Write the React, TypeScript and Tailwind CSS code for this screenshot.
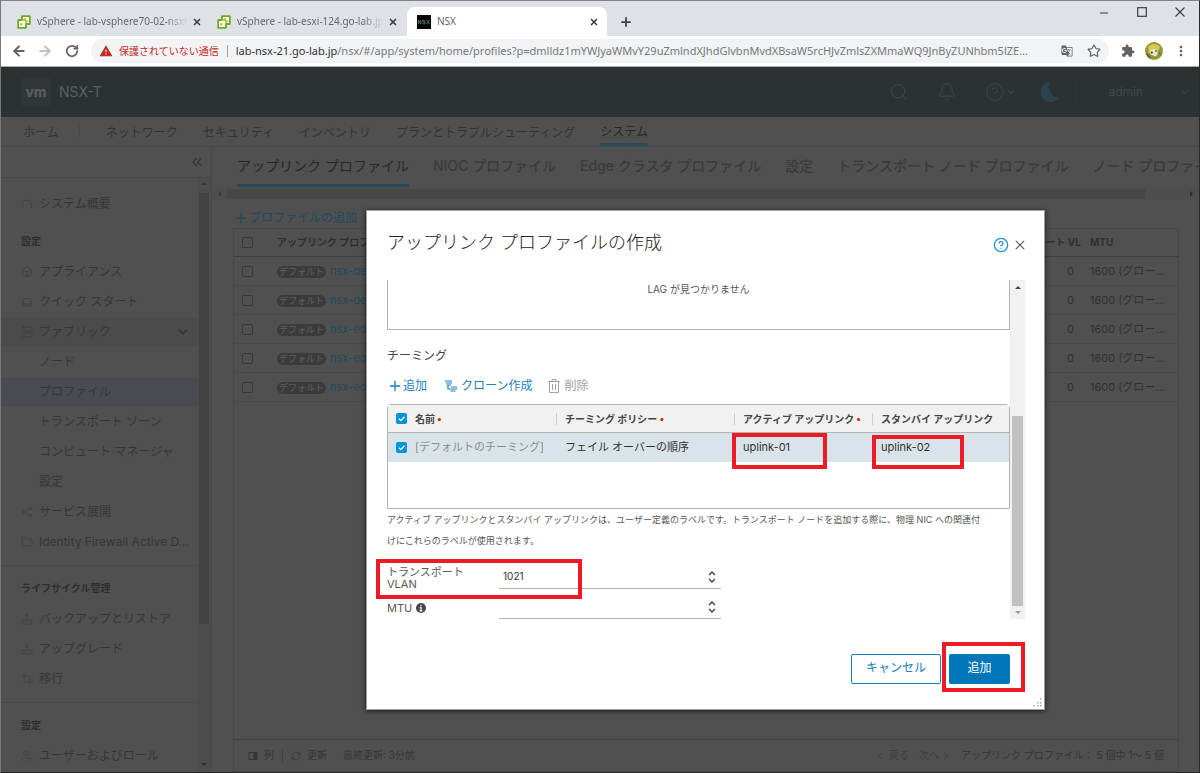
import type { ReactNode } from 'react'
import {
  ArrowLeft,
  ArrowRight,
  Bell,
  Box,
  ChevronDown,
  ChevronLeft,
  ChevronRight,
  ChevronsLeft,
  CircleHelp,
  Crop,
  Folder,
  Gauge,
  HardDriveDownload,
  HardDriveUpload,
  Laptop,
  Plus,
  RefreshCw,
  RotateCw,
  Search,
  Server,
  Share2,
  Star,
  Users,
  X,
} from 'lucide-react'
import type { LucideIcon } from 'lucide-react'
import { MdExtension, MdGTranslate, MdMoreVert, MdWarning } from 'react-icons/md'

const appFont = "font-['Inter','Noto_Sans_CJK_JP',sans-serif]"
const chromeFont = "font-['Noto_Sans','Noto_Sans_CJK_JP',sans-serif]"

interface SideItem {
  label: string
  icon?: LucideIcon
  open?: boolean
  active?: boolean
}

interface SideGroup {
  title?: string
  items: SideItem[]
}

const sideGroups: SideGroup[] = [
  { items: [{ label: 'システム概要', icon: Gauge }] },
  {
    title: '設定',
    items: [
      { label: 'アプライアンス', icon: Box },
      { label: 'クイック スタート', icon: Laptop },
      { label: 'ファブリック', icon: Server, open: true },
      { label: 'ノード' },
      { label: 'プロファイル', active: true },
      { label: 'トランスポート ゾーン' },
      { label: 'コンピュート マネージャ' },
      { label: '設定' },
      { label: 'サービス展開', icon: Share2 },
      { label: 'Identity Firewall Active D...', icon: Folder },
    ],
  },
  {
    title: 'ライフサイクル管理',
    items: [
      { label: 'バックアップとリストア', icon: HardDriveUpload },
      { label: 'アップグレード', icon: HardDriveDownload },
      { label: '移行', icon: Crop },
    ],
  },
  { title: '設定', items: [{ label: 'ユーザーおよびロール', icon: Users }] },
]

const mainNav = ['ネットワーク', 'セキュリティ', 'インベントリ', 'プランとトラブルシューティング', 'システム']

const profileTabs = [
  'アップリンク プロファイル',
  'NIOC プロファイル',
  'Edge クラスタ プロファイル',
  '設定',
  'トランスポート ノード プロファイル',
  'ノード プロファイル',
]

const profiles = ['nsx-de', 'nsx-de', 'nsx-ed', 'nsx-ed', 'nsx-ed']

function VSphereIcon() {
  return (
    <svg viewBox="0 0 14 14" className="h-3.5 w-3.5 shrink-0">
      <path d="M5 1.2h7.8V9H9v3.8H1.2V5H5z" fill="#fff" stroke="#62b01e" strokeWidth="1.8" strokeLinejoin="round" />
      <path d="M5 5h4v4" fill="none" stroke="#62b01e" strokeWidth="1" />
      <path d="M6.8 3.2h2.4v2.2H6.800zM3.2 8.2h2.4v2.4H3.200z" fill="#f9a825" />
      <path d="M9.600 5.400h1.600v1.600H9.600z" fill="#f9a825" />
    </svg>
  )
}

function BrowserTab({ title, divider }: { title: string; divider?: boolean }) {
  return (
    <div
      className={
        divider
          ? 'flex w-[206px] shrink-0 items-center pt-1.5 pl-4'
          : 'flex w-[200px] shrink-0 items-center pt-1.5 pl-2.5'
      }
    >
      <VSphereIcon />
      <span className="ml-1.5 flex-1 whitespace-nowrap bg-gradient-to-r from-[#5f6368] from-85% to-transparent bg-clip-text text-[10px] text-transparent">
        {title}
      </span>
      <button aria-label="閉じる" className="ml-1">
        <X className="h-2.5 w-2.5 text-[#3c4043]" strokeWidth={4} />
      </button>
      <span className={divider ? 'ml-2 h-4 w-px bg-[#8a8d91]' : 'ml-2 h-4 w-px'} />
    </div>
  )
}

function TabStrip() {
  return (
    <div className="flex h-[35px] bg-[#dee1e6] text-[#5f6368]">
      <BrowserTab title="vSphere - lab-vsphere70-02-nsxt" divider />
      <BrowserTab title="vSphere - lab-esxi-124.go-lab.jp" />
      <div className="mt-1.5 flex w-[200px] items-center rounded-t-lg bg-white pl-2.5 pr-2">
        <svg viewBox="0 0 14 14" className="h-3.5 w-3.5">
          <rect width="14" height="14" fill="#000" />
          <path
            d="M1.5 9V5l2.3 4V5M8 5.3H5.6v1.6H8v1.8H5.4M9.6 5l3 4M12.6 5l-3 4"
            fill="none"
            stroke="#4f8f86"
            strokeWidth=".8"
          />
        </svg>
        <span className="ml-1.5 flex-1 text-[10px]">NSX</span>
        <button aria-label="閉じる">
          <X className="h-2.5 w-2.5 text-[#3c4043]" strokeWidth={4} />
        </button>
      </div>
      <button aria-label="新しいタブ" className="ml-3 pt-1.5">
        <Plus className="h-3.5 w-3.5 text-[#3c4043]" strokeWidth={3} />
      </button>
      <div className="ml-auto flex items-start gap-7 pt-1.5 pr-3.5 text-[#3a3d40]">
        <button aria-label="最小化">
          <svg viewBox="0 0 10 10" className="h-2.5 w-2.5">
            <path d="M1 6h8" stroke="currentColor" />
          </svg>
        </button>
        <button aria-label="最大化">
          <svg viewBox="0 0 10 10" className="h-2.5 w-2.5">
            <rect x=".7" y=".7" width="8.6" height="8.6" fill="none" stroke="currentColor" strokeWidth="1.2" />
          </svg>
        </button>
        <button aria-label="ウィンドウを閉じる">
          <svg viewBox="0 0 10 10" className="h-2.5 w-2.5">
            <path d="M.5.5l9 9M9.5.5l-9 9" stroke="currentColor" strokeWidth="1.1" />
          </svg>
        </button>
      </div>
    </div>
  )
}

function AddressBar() {
  return (
    <div className="flex h-[31px] items-center border-b border-[#a9abad] bg-white pl-2.5 pr-2.5">
      <button aria-label="戻る">
        <ArrowLeft className="h-4 w-4 text-[#5f6368]" strokeWidth={3} />
      </button>
      <button aria-label="進む" className="ml-2.5">
        <ArrowRight className="h-4 w-4 text-[#bdc1c6]" strokeWidth={3} />
      </button>
      <button aria-label="再読み込み" className="ml-3">
        <RotateCw className="h-3.5 w-3.5 text-[#5f6368]" strokeWidth={3} />
      </button>
      <div className="ml-3 flex h-6 min-w-0 flex-1 items-center rounded-full bg-[#f1f3f4] px-2">
        <MdWarning className="h-3.5 w-3.5 shrink-0 text-[#c5281c]" />
        <span className="ml-1.5 shrink-0 text-[10px] text-[#c5281c]">保護されていない通信</span>
        <span className="mx-2 h-3 w-px shrink-0 bg-[#9aa0a6]" />
        <span className="flex-1 whitespace-nowrap text-[11px] text-[#75797d]">
          <span className="text-[#303236]">lab-nsx-21.go-lab.jp</span>
          /nsx/#/app/system/home/profiles?p=dmlldz1mYWJyaWMvY29uZmlndXJhdGlvbnMvdXBsaW5rcHJvZmlsZXMmaWQ9JnByZUNhbm5lZE...
        </span>
        <MdGTranslate className="ml-2 h-3 w-3 shrink-0 text-[#5f6368]" />
        <button aria-label="ブックマーク" className="ml-3.5">
          <Star className="h-3.5 w-3.5 text-[#5f6368]" strokeWidth={2} />
        </button>
      </div>
      <MdExtension className="ml-3 h-3.5 w-3.5 text-[#5f6368]" />
      <svg viewBox="0 0 18 18" className="ml-2.5 h-[18px] w-[18px]">
        <circle cx="9" cy="9" r="9" fill="#8f9a3a" />
        <path d="M3 5c3-4 9-4 12 0l-2 5-4-3-5 4z" fill="#d9c94f" />
        <path d="M5 9c1-2 5-3 7 0s-1 6-3 5-5-2-4-5z" fill="#e9e6c8" />
        <path d="M1 11c2 0 3 3 6 6-3-.4-5-3-6-6zM14 10c2 1 2 2 1 4z" fill="#4f6326" />
        <circle cx="6.8" cy="10.4" r="1" fill="#2b2b2b" />
        <circle cx="11" cy="9" r=".8" fill="#2b2b2b" />
      </svg>
      <MdMoreVert className="ml-2.5 h-4 w-4 text-[#5f6368]" />
    </div>
  )
}

function AppHeader() {
  return (
    <header className="flex h-[50px] shrink-0 items-center bg-[#2c3134] pl-5 pr-2 text-[#43484b]">
      <div className="flex h-[30px] w-[30px] items-center justify-center rounded bg-[#303638] text-sm font-bold text-[#5b5f61]">
        vm
      </div>
      <span className="ml-2 text-sm text-[#5b5f61]">NSX-T</span>
      <div className="ml-auto flex items-center">
        <Search className="h-5 w-5" strokeWidth={1} />
        <Bell className="ml-7 h-5 w-5" strokeWidth={1} />
        <CircleHelp className="ml-7 h-5 w-5" strokeWidth={1} />
        <ChevronDown className="h-3 w-3" />
        <svg viewBox="0 0 18 20" className="ml-6 h-5 w-[18px]">
          <path d="M9.5 0A10 10 0 1 0 18 15.5 10 10 0 0 1 9.500 0z" fill="#2c4350" />
        </svg>
        <span className="ml-4 h-8 w-px bg-[#2f3437]" />
        <span className="ml-8 text-xs">admin</span>
        <ChevronDown className="ml-9 h-3 w-3" />
      </div>
    </header>
  )
}

function MainNav() {
  return (
    <nav className="flex h-[30px] shrink-0 items-stretch border-b border-[#484848] pl-[22px] text-xs text-[#343434]">
      <a href="#home" className="flex items-center pt-0.5">ホーム</a>
      <span className="ml-5 my-2 w-px bg-[#494949]" />
      <div className="ml-[26px] flex gap-[25px]">
        {mainNav.map((label) => (
          <a
            key={label}
            href="#nav"
            className={
              label === 'システム'
                ? 'flex items-center border-b-[3px] border-[#2c4c5e] pt-1 text-[#262626]'
                : 'flex items-center pt-0.5'
            }
          >
            {label}
          </a>
        ))}
      </div>
    </nav>
  )
}

function Sidebar() {
  return (
    <aside className="flex w-[211px] shrink-0 flex-col border-r border-[#494949] text-xs text-[#373737]">
      <div className="flex h-[31px] shrink-0 items-center justify-end border-b border-[#494949] pr-1.5">
        <button aria-label="折りたたむ">
          <ChevronsLeft className="h-4 w-4" strokeWidth={2} />
        </button>
      </div>
      <div className="flex min-h-0 flex-1">
        <div className="min-w-0 flex-1 overflow-hidden">
          {sideGroups.map((group, i) => (
            <div key={i} className={i > 1 ? 'mt-2 border-t border-[#494949] pt-2' : i === 1 ? 'pt-2' : 'pt-[11px]'}>
              {group.title && (
                <h2 className="flex h-[30px] items-center pl-5 text-[10px] font-bold text-[#2e2e2e]">{group.title}</h2>
              )}
              {group.items.map(({ label, icon: Icon, open, active }) => (
                <a
                  key={label}
                  href="#side"
                  className={`flex h-[30px] items-center pl-5 ${active ? 'bg-[#484c50]' : open ? 'bg-[#4b4b4b]' : ''}`}
                >
                  <span className="w-[18px] shrink-0">
                    {Icon && <Icon className="h-3 w-3 text-[#3c4446]" strokeWidth={2} />}
                  </span>
                  <span className="flex-1 truncate">{label}</span>
                  {open && <ChevronDown className="mr-2 h-3.5 w-3.5 text-[#2e2e2e]" />}
                </a>
              ))}
            </div>
          ))}
        </div>
        <div className="flex w-[13px] flex-col items-center bg-[#4d4d4d] pr-0.5">
          <span className="my-1 h-0 w-0 border-x-[3px] border-b-[3px] border-x-transparent border-b-[#3a3a3a]" />
          <span className="mt-1 h-[431px] w-2.5 bg-[#434343]" />
          <span className="mt-auto mb-1.5 h-0 w-0 border-x-[3px] border-t-[3px] border-x-transparent border-t-[#2c2c2c]" />
        </div>
      </div>
    </aside>
  )
}

function DimCheckbox({ label }: { label: string }) {
  return (
    <input
      type="checkbox"
      aria-label={label}
      className="block h-[11px] w-[11px] appearance-none rounded-xs border border-[#383838]"
    />
  )
}

function ProfileTable() {
  return (
    <div className="flex flex-1 flex-col border border-[#484848]">
      <div className="flex-1">
        <table className="w-full table-fixed border-separate border-spacing-0 text-[11px] text-[#303030]">
          <thead>
            <tr className="h-7 text-left text-[10px]">
              <th className="w-[43px] border-b border-[#404040] pl-2">
                <DimCheckbox label="すべて選択" />
              </th>
              <th className="border-b border-[#404040] p-0">アップリンク プロフ</th>
              <th className="w-[110px] whitespace-nowrap border-b border-[#404040] p-0 pr-[9px] text-right">
                トランスポート VL
              </th>
              <th className="w-[88px] border-b border-[#404040] p-0">MTU</th>
            </tr>
          </thead>
          <tbody>
            {profiles.map((name, i) => (
              <tr key={i} className="h-[29px]">
                <td className="border-b border-[#494949] pl-2">
                  <DimCheckbox label={name} />
                </td>
                <td className="border-b border-[#494949] p-0">
                  <span className="mr-1 inline-block rounded-full bg-[#3b3b3b] px-0.5 text-[9px] leading-3 text-[#606060]">
                    デフォルト
                  </span>
                  <a href="#profile" className="text-[#24495f]">{name}</a>
                </td>
                <td className="border-b border-[#494949] p-0 pr-4 text-right">0</td>
                <td className="border-b border-[#494949] p-0 whitespace-nowrap">1600 (グロー...</td>
              </tr>
            ))}
          </tbody>
        </table>
      </div>
      <div className="flex h-8 items-center border-t border-[#404040] px-3.5 text-[10px] text-[#363636]">
        <svg viewBox="0 0 10 10" className="h-2.5 w-2.5">
          <path d="M1 1.500h8v7H1z" fill="none" stroke="currentColor" />
          <path d="M5.500 1.500H9v7H5.500z" fill="currentColor" />
        </svg>
        <button className="ml-1.5">列</button>
        <span className="mx-2 h-3 w-px bg-[#404040]" />
        <RefreshCw className="h-2.5 w-2.5" />
        <button className="ml-1.5">更新</button>
        <span className="ml-4">最終更新: 3分前</span>
        <div className="ml-auto flex items-center text-[#3e3e3e]">
          <ChevronLeft className="h-2.5 w-2.5" />
          <button className="ml-1">戻る</button>
          <button className="ml-2.5">次へ</button>
          <ChevronRight className="ml-0.5 h-2.5 w-2.5" />
          <span className="ml-2.5 text-[#363636]">アップリンク プロファイル： 5 個中 1～ 5 個</span>
        </div>
      </div>
    </div>
  )
}

function Content() {
  return (
    <main className="flex min-w-0 flex-1 flex-col">
      <div className="flex h-10 shrink-0 gap-6 overflow-hidden whitespace-nowrap pl-[25px] text-sm text-[#3b3b3b]">
        {profileTabs.map((label, i) => (
          <a
            key={label}
            href="#tab"
            className={
              i === 0
                ? 'flex items-center border-b-[3px] border-[#26495d] pt-px text-[#282828]'
                : 'flex items-center border-b-[3px] border-transparent pt-px font-medium'
            }
          >
            {label}
          </a>
        ))}
      </div>
      <div className="flex h-[13px] shrink-0 items-center bg-[#4e4e4e] px-1.5">
        <span className="h-0 w-0 border-y-[3px] border-r-[3px] border-y-transparent border-r-[#383838]" />
        <span className="ml-1.5 mr-11 h-2.5 flex-1 bg-[#474747]" />
        <span className="h-0 w-0 border-y-[3px] border-l-[3px] border-y-transparent border-l-[#2c2c2c]" />
      </div>
      <div className="flex flex-1 flex-col pl-[21px] pr-5">
        <button className="mt-2 flex h-5 items-center text-xs text-[#24495f]">
          <Plus className="h-4 w-4" strokeWidth={2} />
          プロファイルの追加
        </button>
        <ProfileTable />
      </div>
    </main>
  )
}

function BlueCheckbox({ label }: { label: string }) {
  return (
    <span className="relative block h-[11px] w-[11px]">
      <input
        type="checkbox"
        defaultChecked
        aria-label={label}
        className="block h-[11px] w-[11px] appearance-none rounded-xs bg-[#0095d3]"
      />
      <svg viewBox="0 0 11 11" className="pointer-events-none absolute inset-0">
        <path d="M2.800 5.600l2 2 3.600-3.800" fill="none" stroke="#fff" strokeWidth="1.300" />
      </svg>
    </span>
  )
}

function HeadCell({ children, required, first }: { children: ReactNode; required?: boolean; first?: boolean }) {
  return (
    <div className={first ? 'flex whitespace-nowrap leading-3' : 'flex whitespace-nowrap border-l border-[#d0d0d0] pl-2 leading-3'}>
      {children}
      {required && <span className="ml-0.5 leading-2.5 text-[#e12200]">•</span>}
    </div>
  )
}

function TeamingTable() {
  return (
    <div className="h-[105px] rounded-t-sm border border-[#b3b3b3]">
      <table className="w-full table-fixed border-separate border-spacing-0 text-[11px] text-[#313131]">
        <thead>
          <tr className="h-7 bg-[#f1f1f1] text-left text-[10px] text-[#454545]">
            <th className="w-[27px] border-b border-[#b3b3b3] p-0 pl-2"><BlueCheckbox label="すべて選択" /></th>
            <th className="w-[141px] border-b border-[#b3b3b3] p-0"><HeadCell required first>名前</HeadCell></th>
            <th className="w-[178px] border-b border-[#b3b3b3] p-0"><HeadCell required>チーミング ポリシー</HeadCell></th>
            <th className="w-[138px] border-b border-[#b3b3b3] p-0"><HeadCell required>アクティブ アップリンク</HeadCell></th>
            <th className="border-b border-[#b3b3b3] p-0"><HeadCell>スタンバイ アップリンク</HeadCell></th>
          </tr>
        </thead>
        <tbody>
          <tr className="h-[29px] whitespace-nowrap bg-[#d9e4ea]">
            <td className="p-0 pl-2"><BlueCheckbox label="デフォルトのチーミング" /></td>
            <td className="p-0 text-[#8b8b8b]">[デフォルトのチーミング]</td>
            <td className="p-0 pl-[9px]">フェイル オーバーの順序</td>
            <td className="relative p-0 pl-[9px]">
              uplink-01
              <span className="pointer-events-none absolute top-0 -left-0.5 h-9 w-[95px] border-4 border-[#ed1c24]" />
            </td>
            <td className="relative p-0 pl-[9px]">
              uplink-02
              <span className="pointer-events-none absolute top-0.5 left-0 h-[34px] w-[92px] border-4 border-[#ed1c24]" />
            </td>
          </tr>
        </tbody>
      </table>
    </div>
  )
}

function NumberRow({ id, value, children }: { id: string; value?: string; children: ReactNode }) {
  return (
    <div className="flex h-[30px] items-end">
      <label htmlFor={id} className="flex h-full w-28 items-center pt-2 text-[11px] leading-3 text-[#565656]">
        {children}
      </label>
      <div className="flex h-6 w-[222px] items-center border-b border-[#b3b3b3] pr-1">
        <input
          id={id}
          defaultValue={value}
          inputMode="numeric"
          className="min-w-0 flex-1 bg-transparent pl-1 text-[10px] text-[#313131] outline-none"
        />
        <svg viewBox="0 0 10 14" className="h-3.5 w-2.5">
          <path d="M2 5L5 2 8 5M2 9L5 12 8 9" fill="none" stroke="#3a3a3a" strokeWidth="1.300" />
        </svg>
      </div>
    </div>
  )
}

function CreateProfileDialog() {
  return (
    <section
      role="dialog"
      aria-labelledby="dialog-title"
      className="absolute top-[209px] left-[365px] w-[679px] border border-[#a0a0a0] bg-white pl-5 pr-[19px] shadow-[0_1px_5px_rgba(0,0,0,0.7)]"
    >
      <div className="flex h-[69px] items-start pt-[18px]">
        <h1 id="dialog-title" className="text-lg font-light text-[#222]">アップリンク プロファイルの作成</h1>
        <div className="ml-auto mt-2 flex items-center gap-1.5">
          <button aria-label="ヘルプ" className="text-[#2a93cf]">
            <CircleHelp className="h-4 w-4" strokeWidth={2} />
          </button>
          <button aria-label="閉じる" className="text-[#565656]">
            <svg viewBox="0 0 10 10" className="h-2.5 w-2.5">
              <path d="M.8.8l8.400 8.400M9.200.8L.8 9.200" stroke="currentColor" strokeWidth="1.200" />
            </svg>
          </button>
        </div>
      </div>
      <div className="flex">
        <div className="h-[339px] min-w-0 flex-1">
          <div className="h-[50px] border border-t-0 border-[#b3b3b3] pt-px text-center text-[10px] leading-4 text-[#565656]">
            LAG が見つかりません
          </div>
          <h2 className="mt-4 text-xs leading-5 text-[#454545]">チーミング</h2>
          <div className="mt-2.5 flex h-5 items-center text-xs text-[#1a80bd]">
            <button className="flex items-center">
              <Plus className="h-4 w-4" strokeWidth={2} />
              追加
            </button>
            <button className="ml-[18px] flex items-center gap-1">
              <svg viewBox="0 0 12 12" className="h-3 w-3">
                <path
                  d="M0 1h7M1 3h6M1.500 5H6M6 7h6M6 9h6M5.500 11h5M3 5v4h3"
                  fill="none"
                  stroke="currentColor"
                  strokeWidth="1.200"
                />
              </svg>
              クローン作成
            </button>
            <button className="ml-4 flex items-center gap-1 text-[#a0a0a0]" disabled>
              <svg viewBox="0 0 12 14" className="h-3.5 w-3">
                <path
                  d="M0 2.500h12M4 2.500v-2h4v2M1.500 2.500v11h9v-11M4.500 5v6M7.500 5v6"
                  fill="none"
                  stroke="currentColor"
                />
              </svg>
              削除
            </button>
          </div>
          <div className="mt-2">
            <TeamingTable />
          </div>
          <p className="whitespace-nowrap text-[9px] leading-[21px] text-[#565656]">
            アクティブ アップリンクとスタンバイ アップリンクは、ユーザー定義のラベルです。トランスポート ノードを追加する際に、物理 NIC への関連付
            <br />
            けにこれらのラベルが使用されます。
          </p>
          <div className="relative mt-2">
            <NumberRow id="vlan" value="1021">
              <span>
                トランスポート
                <br />
                VLAN
              </span>
            </NumberRow>
            <NumberRow id="mtu">
              MTU
              <svg viewBox="0 0 10 10" className="ml-1 h-2.5 w-2.5">
                <circle cx="5" cy="5" r="5" fill="#454545" />
                <path d="M5 1.800v1.400M3.800 4.600H5v3M3.600 7.800h2.800" stroke="#fff" strokeWidth="1.200" fill="none" />
              </svg>
            </NumberRow>
            <span className="pointer-events-none absolute top-0 -left-[11px] h-10 w-[206px] border-4 border-[#ed1c24]" />
          </div>
        </div>
        <div className="flex w-[15px] flex-col items-center bg-[#f1f1f1]">
          <span className="mt-1.5 h-0 w-0 border-x-[3px] border-b-[3px] border-x-transparent border-b-[#454545]" />
          <span className="mt-auto h-[190px] w-[11px] bg-[#c1c1c1]" />
          <span className="my-[5px] h-0 w-0 border-x-[3px] border-t-[3px] border-x-transparent border-t-[#9a9a9a]" />
        </div>
      </div>
      <div className="flex h-[90px] justify-end gap-2 pt-[35px] pr-[15px] text-xs">
        <button className="h-[30px] w-[90px] rounded-xs border border-[#1a80bd] pb-0.5 text-[#1a80bd]">キャンセル</button>
        <div className="relative h-[30px]">
          <button className="h-full w-[61px] rounded-xs bg-[#0077b8] pb-0.5 text-white">追加</button>
          <span className="pointer-events-none absolute -top-3 -left-[7px] h-[50px] w-[83px] border-4 border-[#ed1c24]" />
        </div>
      </div>
      <svg viewBox="0 0 9 9" className="absolute right-0.5 bottom-0.5 h-[9px] w-[9px]">
        <path d="M7 0h1.500v1.500H7zM4 4h1.500v1.500H4zM7 4h1.500v1.500H7zM0 7h1.500v1.500H0zM4 7h1.500v1.500H4zM7 7h1.500v1.500H7z" fill="#aaa" />
      </svg>
    </section>
  )
}

export default function App() {
  return (
    <div className="relative flex h-screen flex-col overflow-hidden border border-[#2a2a2c] border-t-[#828287] border-l-[#77797c] bg-[#505050]">
      <div className={`shrink-0 ${chromeFont}`}>
        <TabStrip />
        <AddressBar />
      </div>
      <div className={`flex min-h-0 flex-1 flex-col ${appFont}`}>
        <AppHeader />
        <MainNav />
        <div className="flex min-h-0 flex-1">
          <Sidebar />
          <Content />
        </div>
        <CreateProfileDialog />
      </div>
    </div>
  )
}
